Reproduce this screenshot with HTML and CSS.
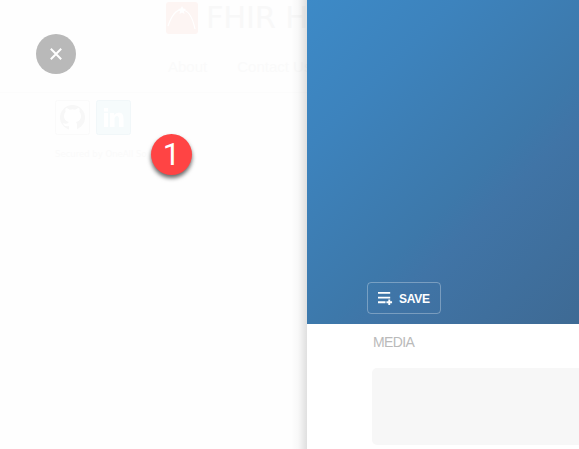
FILE: index.html
```html
<!DOCTYPE html>
<html lang="en">
<head>
<meta charset="utf-8">
<title>FHIR</title>
<link rel="stylesheet" href="styles.css">
</head>
<body>
<div class="screen">
  <main class="backdrop">
    <header class="brand">
      <svg class="logo" viewBox="0 0 32 32"><rect width="32" height="32" rx="3" fill="#fdf5f3"/><path d="M2 24Q8 7 16 8Q25 8 29 27" fill="none" stroke="#fff" stroke-width="1.200"/><path d="M16 4l1.300 2.500 2.700.5-2 2 .5 3-2.500-1.500-2.500 1.500.5-3-2-2 2.700-.5z" fill="#fff"/></svg>
      <span class="title">FHIR H</span>
    </header>
    <nav class="links"><span>About</span><span>Contact Us</span></nav>
    <section class="login">
      <div class="providers">
        <svg class="provider" viewBox="0 0 35 35"><rect x=".5" y=".5" width="34" height="34" rx="2" fill="#fefefe" stroke="#fafafa"/><circle cx="17.500" cy="17.500" r="12.500" fill="#f7f7f7"/><path d="M14 30v-4q-5 1-6-3 4 2 6-1-5-1-5-6 0-3 1.500-4-.5-2 .3-4 2 0 4 1.700 2.700-.7 5.400 0 2-1.700 4-1.700.8 2 .3 4 1.500 1 1.500 4 0 5-5 6 1 1 1 3v5z" fill="#fff"/></svg>
        <svg class="provider" viewBox="0 0 35 35"><rect x=".5" y=".5" width="34" height="34" rx="2" fill="#f6fbfc" stroke="#f1f7f9"/><path d="M8 13h4v14H8zM8 8h4v3.500H8zM14 13h4v2q2-2.500 5-2.500 4.500 0 4.500 6V27h-4.500v-7.500q0-3.500-2-3.500-2.500 0-2.500 3.500V27H14z" fill="#fff"/></svg>
      </div>
      <p class="secured">Secured by OneAll So</p>
    </section>
    <div class="edge"></div>
    <button class="close" aria-label="Close"><svg viewBox="0 0 40 40"><path d="M14.800 14.800l10.400 10.400m0-10.400L14.800 25.200" fill="none" stroke="#fff" stroke-width="2"/></svg></button>
    <div class="marker">1</div>
  </main>
  <aside class="panel">
    <div class="hero">
      <button class="save"><svg viewBox="0 0 16 16"><path d="M0 2h13M0 7h13M0 12h8M9 12h6M12 9v6" fill="none" stroke="#fff" stroke-width="2"/></svg><span>SAVE</span></button>
    </div>
    <section class="media">
      <h2>MEDIA</h2>
      <div class="preview"></div>
    </section>
  </aside>
</div>
</body>
</html>
```
FILE: styles.css
```css
* { box-sizing: border-box; }
body { margin: 0; background: #fff; font-family: "Liberation Sans", sans-serif; }
button { padding: 0; border: 0; font: inherit; }
.screen { display: flex; width: 579px; height: 449px; overflow: hidden; }
.backdrop { position: relative; flex: 0 0 307px; overflow: hidden; background: #fefefe; }
.brand { display: flex; align-items: flex-start; gap: 8px; padding: 2px 0 0 166px; height: 58px; white-space: nowrap; }
.logo { flex: none; width: 32px; height: 32px; }
.title { margin-top: -3px; font: 30.500px/38px "DejaVu Sans", sans-serif; letter-spacing: -.2px; color: #f8f8f8; }
.links { display: flex; gap: 30px; height: 34px; padding-left: 168px; font-size: 15px; line-height: 18px; color: #fafafa; white-space: nowrap; }
.login { border-top: 1px solid #fcfcfc; padding: 7px 0 0 55px; }
.providers { display: flex; gap: 6px; height: 35px; }
.provider { width: 35px; height: 35px; }
.secured { margin: 11px 0 0; font: 8.500px/16px "DejaVu Sans", sans-serif; color: #fafafa; white-space: nowrap; }
.edge { position: absolute; top: 0; right: 0; width: 16px; height: 100%; background: linear-gradient(90deg, rgba(0,0,0,0), rgba(0,0,0,.025) 45%, rgba(0,0,0,.12)); }
.close { position: absolute; left: 36px; top: 34px; width: 40px; height: 40px; border-radius: 50%; background: #b9b9b9; }
.close svg { display: block; width: 40px; height: 40px; }
.marker { position: absolute; left: 151px; top: 134px; width: 41px; height: 41px; border-radius: 50%; background: #ff4444; color: #fff; font: 31px/42px Roboto, sans-serif; text-align: center; box-shadow: 0 3px 4px rgba(0,0,0,.6); }
.panel { flex: 1; min-width: 0; background: #fff; }
.hero { display: flex; align-items: flex-end; height: 324px; padding: 0 0 10px 60px; background: linear-gradient(135deg, #3d8ac7 0%, #3d83bd 25%, #3d78aa 58%, #4074a6 66%, #3e6a94 100%); }
.save { display: flex; align-items: center; gap: 6px; width: 74px; height: 32px; padding: 0 0 0 10px; border: 1px solid rgba(255,255,255,.3); border-radius: 4px; background: transparent; color: #fff; font-size: 12px; font-weight: 700; letter-spacing: -.3px; }
.save svg { flex: none; width: 15px; height: 15px; }
.save span { padding-top: 2px; }
.media { padding: 10px 0 0 65px; }
.media h2 { margin: 0 0 18px 1px; font-size: 14px; line-height: 16px; font-weight: 400; letter-spacing: -.6px; color: #bababa; }
.preview { height: 77px; border-radius: 5px 0 0 5px; background: #f7f7f7; }
```
